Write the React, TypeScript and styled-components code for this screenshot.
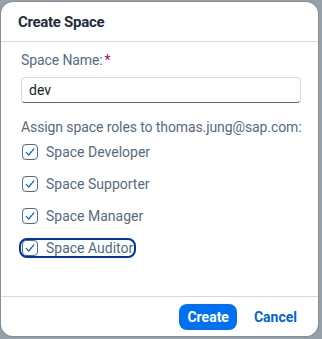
import React from "react";
import styled, { createGlobalStyle } from "styled-components";

const GlobalStyle = createGlobalStyle`
  html, body {
    margin: 0;
    padding: 0;
    background: #98a0a7;
  }
  body {
    font-family: Roboto, "Liberation Sans", Arial, sans-serif;
  }
`;

const Page = styled.div`
  width: 322px;
  height: 339px;
  box-sizing: border-box;
  padding: 2px 4px 3px 1px;
  display: flex;
`;

const Dialog = styled.div`
  flex: 1;
  background: #ffffff;
  border-radius: 12px;
  display: flex;
  flex-direction: column;
  overflow: hidden;
  box-shadow: 0 0 0 1px rgba(85, 107, 130, 0.35);
`;

const Header = styled.div`
  height: 40px;
  display: flex;
  align-items: center;
  padding: 1px 0 0 17px;
  box-sizing: border-box;
  border-bottom: 1px solid #d9d9d9;
  font-size: 15px;
  letter-spacing: -0.3px;
  font-weight: bold;
  color: #1d2d3e;
`;

const Body = styled.div`
  flex: 1;
  padding: 9px 17px 0 20px;
  display: flex;
  flex-direction: column;
`;

const Label = styled.div`
  font-size: 14px;
  line-height: 18px;
  color: #556b82;
  white-space: nowrap;
  letter-spacing: -0.1px;
`;

const Required = styled.span`
  color: #ba066c;
  margin-left: 2px;
`;

const TextInput = styled.input`
  margin-top: 8px;
  height: 26px;
  box-sizing: border-box;
  border: 1px solid #d5dadd;
  border-bottom-color: #556b81;
  border-radius: 4px;
  padding: 0 7px;
  font-family: inherit;
  font-size: 14px;
  color: #131e29;
  outline: none;
  margin-bottom: 15px;
`;

const Roles = styled.div`
  display: flex;
  flex-direction: column;
  align-items: flex-start;
`;

const Row = styled.div`
  height: 32px;
  display: flex;
  align-items: center;
`;

const CheckItem = styled.label<{ $focused?: boolean }>`
  display: inline-flex;
  align-items: center;
  gap: 8px;
  height: 20px;
  padding: 0 3px;
  margin-left: -2px;
  border-radius: 8px;
  font-size: 14px;
  color: #556b82;
  box-sizing: border-box;
  outline: ${(p) => (p.$focused ? "2px solid #0032a5" : "none")};
  outline-offset: -2px;
`;

const Box = styled.span`
  width: 16px;
  height: 16px;
  box-sizing: border-box;
  border: 1px solid #556b81;
  border-radius: 4px;
  display: flex;
  align-items: center;
  justify-content: center;
`;

const Footer = styled.div`
  height: 39px;
  border-top: 1px solid #d9d9d9;
  display: flex;
  align-items: center;
  justify-content: flex-end;
  padding-right: 13px;
`;

const Button = styled.button<{ $primary?: boolean }>`
  height: 26px;
  padding: 0 8px;
  border: none;
  border-radius: 8px;
  font-family: inherit;
  font-size: 14px;
  font-weight: bold;
  background: ${(p) => (p.$primary ? "#0070f2" : "transparent")};
  color: ${(p) => (p.$primary ? "#ffffff" : "#0064d9")};
  margin-left: ${(p) => (p.$primary ? "0" : "9px")};
`;

const Check = () => (
  <svg width="12" height="12" viewBox="0 0 12 12">
    <path d="M2.2 6.4 L4.8 9 L9.8 2.8" fill="none" stroke="#0064d9" strokeWidth="1.2" strokeLinecap="round" strokeLinejoin="round" />
  </svg>
);

const roles = ["Space Developer", "Space Supporter", "Space Manager", "Space Auditor"];

export default function App() {
  return (
    <>
      <GlobalStyle />
      <Page>
        <Dialog>
          <Header>Create Space</Header>
          <Body>
            <Label>
              Space Name:<Required>*</Required>
            </Label>
            <TextInput defaultValue="dev" />
            <Label>Assign space roles to thomas.jung@sap.com:</Label>
            <Roles>
              {roles.map((r, i) => (
                <Row key={r}>
                  <CheckItem $focused={i === roles.length - 1}>
                    <Box>
                      <Check />
                    </Box>
                    {r}
                  </CheckItem>
                </Row>
              ))}
            </Roles>
          </Body>
          <Footer>
            <Button $primary>Create</Button>
            <Button>Cancel</Button>
          </Footer>
        </Dialog>
      </Page>
    </>
  );
}
